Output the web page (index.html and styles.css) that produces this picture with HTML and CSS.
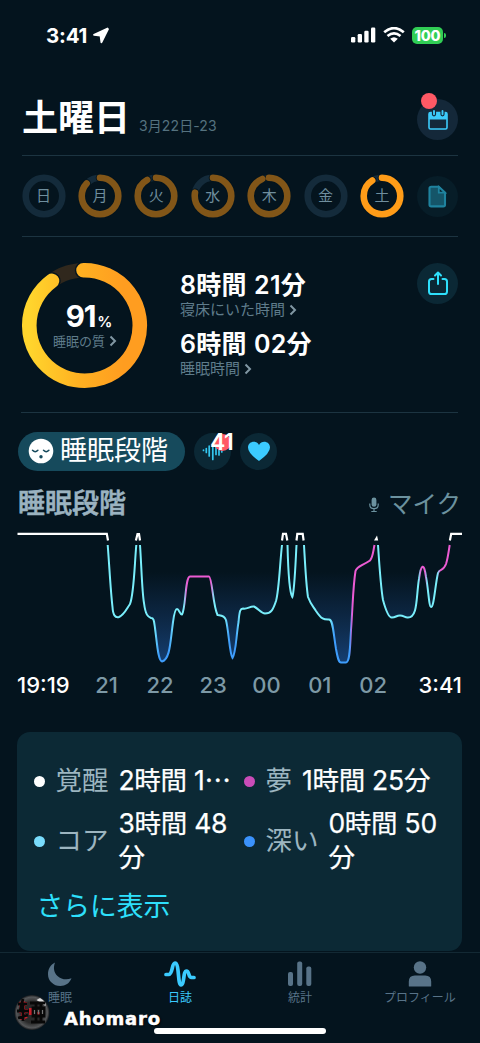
FILE: index.html
```html
<!DOCTYPE html>
<html lang="ja">
<head>
<meta charset="utf-8">
<title>睡眠日誌</title>
<link rel="stylesheet" href="styles.css">
</head>
<body>
<div class="app">
  <header class="status">
    <div class="status-left"><span class="clock">3:41</span>
      <svg width="18" height="18" viewBox="0 0 18 18"><path d="M15.500 1.500 2 7.800l6.500.900.900 6.700L16 2.200z" fill="#fff" stroke="#fff" stroke-width="1.800" stroke-linejoin="round"/></svg>
    </div>
    <div class="status-right">
      <svg width="25" height="16" viewBox="0 0 25 16" fill="#fff"><rect x="0" y="10" width="4.300" height="5.500" rx="1.200"/><rect x="6.700" y="7" width="4.300" height="8.500" rx="1.200"/><rect x="13.300" y="3.700" width="4.300" height="11.800" rx="1.200"/><rect x="20" y=".5" width="4.300" height="15" rx="1.200"/></svg>
      <svg width="22" height="16" viewBox="0 0 22 16" fill="none" stroke="#fff" stroke-width="2.700"><path d="M1.200 5.300Q11-3 20.800 5.300M4.500 9q6.500-5.400 13 0"/><path d="M7.200 11.800q3.800-3.300 7.600 0L11 15.500z" fill="#fff" stroke="none"/></svg>
      <div class="battery"><span class="cell">100</span><span class="nub"></span></div>
    </div>
  </header>

  <section class="title-row">
    <h1>土曜日</h1><span class="date">3月22日-23</span>
    <button class="round calendar">
      <svg width="22" height="22" viewBox="0 0 22 22"><rect x="2" y="3.500" width="18" height="16.500" rx="1.500" fill="none" stroke="#3ccbfb" stroke-width="1.600"/><path d="M2 4h18v6.500H2z" fill="#3ccbfb"/><path d="M7 2.300v3M15.500 2.300v3" stroke="#142839" stroke-width="4.200" stroke-linecap="round"/><path d="M7 2v3.300M15.500 2v3.300" stroke="#3ccbfb" stroke-width="1.900" stroke-linecap="round"/></svg>
      <i class="dot"></i>
    </button>
  </section>

  <section class="week">
    <div class="day"><svg viewBox="0 0 44 44"><circle class="track" cx="22" cy="22" r="18.300"/></svg><span>日</span></div>
    <div class="day"><svg viewBox="0 0 44 44"><circle class="track" cx="22" cy="22" r="18.300"/><circle class="cut" pathLength="100" stroke-dasharray="87 100" cx="22" cy="22" r="18.300"/><circle class="arc" pathLength="100" stroke-dasharray="87 100" cx="22" cy="22" r="18.300"/></svg><span>月</span></div>
    <div class="day"><svg viewBox="0 0 44 44"><circle class="track" cx="22" cy="22" r="18.300"/><circle class="cut" pathLength="100" stroke-dasharray="92 100" cx="22" cy="22" r="18.300"/><circle class="arc" pathLength="100" stroke-dasharray="92 100" cx="22" cy="22" r="18.300"/></svg><span>火</span></div>
    <div class="day"><svg viewBox="0 0 44 44"><circle class="track" cx="22" cy="22" r="18.300"/><circle class="cut" pathLength="100" stroke-dasharray="78 100" cx="22" cy="22" r="18.300"/><circle class="arc" pathLength="100" stroke-dasharray="78 100" cx="22" cy="22" r="18.300"/></svg><span>水</span></div>
    <div class="day"><svg viewBox="0 0 44 44"><circle class="track" cx="22" cy="22" r="18.300"/><circle class="cut" pathLength="100" stroke-dasharray="94 100" cx="22" cy="22" r="18.300"/><circle class="arc" pathLength="100" stroke-dasharray="94 100" cx="22" cy="22" r="18.300"/></svg><span>木</span></div>
    <div class="day"><svg viewBox="0 0 44 44"><circle class="track" cx="22" cy="22" r="18.300"/></svg><span>金</span></div>
    <div class="day today"><svg viewBox="0 0 44 44"><circle class="track" cx="22" cy="22" r="18.300"/><circle class="cut" pathLength="100" stroke-dasharray="91 100" cx="22" cy="22" r="18.300"/><circle class="arc" pathLength="100" stroke-dasharray="91 100" cx="22" cy="22" r="18.300"/></svg><span>土</span></div>
    <div class="round note">
      <svg width="19" height="23" viewBox="0 0 19 23"><path d="M3.200 1.700h7.600l6.200 6v12q0 1.700-1.700 1.700H3.200q-1.700 0-1.700-1.700V3.400q0-1.700 1.700-1.700z" fill="#155569" stroke="#1f839f" stroke-width="2.100"/><path d="M10.800 2v5.700H17z" fill="#08222d" stroke="#1f839f" stroke-width="1.800"/></svg>
    </div>
  </section>

  <section class="summary">
    <div class="quality">
      <svg class="quality-ring" viewBox="0 0 128 128">
        <defs><linearGradient id="sun" x1="1" y1="0" x2="0" y2="0"><stop offset=".15" stop-color="#ff9d20"/><stop offset=".55" stop-color="#ffb121"/><stop offset="1" stop-color="#ffd52d"/></linearGradient></defs>
        <circle class="q-track" cx="64" cy="64" r="55.700"/>
        <path class="q-cut" d="M63 8.300A55.700 55.700 0 1 1 31.200 19"/>
        <path class="q-arc" d="M63 8.300A55.700 55.700 0 1 1 31.200 19"/>
      </svg>
      <div class="quality-text">
        <div class="score">91<small>%</small></div>
        <div class="link">睡眠の質<svg width="8" height="12" viewBox="0 0 8 12"><path d="M1.500 1.500 6 6l-4.500 4.500"/></svg></div>
      </div>
    </div>
    <div class="times">
      <div class="big">8時間 21分</div>
      <div class="link">寝床にいた時間<svg width="8" height="12" viewBox="0 0 8 12"><path d="M1.500 1.500 6 6l-4.500 4.500"/></svg></div>
      <div class="big second">6時間 02分</div>
      <div class="link">睡眠時間<svg width="8" height="12" viewBox="0 0 8 12"><path d="M1.500 1.500 6 6l-4.500 4.500"/></svg></div>
    </div>
    <button class="round share">
      <svg width="22" height="26" viewBox="0 0 22 26" fill="none" stroke="#2ee0fc" stroke-width="2" stroke-linecap="round" stroke-linejoin="round"><path d="M6.500 8H4.600Q2 8 2 10.600v9.800Q2 23 4.600 23h12.800q2.600 0 2.600-2.600v-9.800Q20 8 17.400 8h-1.900M11 13V1.800M8 4.500l3-3 3 3"/></svg>
    </button>
  </section>

  <nav class="chips">
    <div class="chip">
      <svg width="26" height="26" viewBox="0 0 26 26"><circle cx="13" cy="13" r="12.300" fill="#fff"/><path d="M4.500 12.300q2.700 2.700 5.400 0M15.500 12.300q2.700 2.700 5.400 0" fill="none" stroke="#164a5c" stroke-width="1.500" stroke-linecap="round"/><circle cx="13" cy="18.800" r="1.700" fill="#164a5c"/></svg>
      <span>睡眠段階</span>
    </div>
    <div class="circle">
      <svg width="24" height="20" viewBox="0 0 24 20" stroke="#34c6ef" stroke-width="1.700" stroke-linecap="round"><path d="M2.500 9v.5M5.300 7.500v4M8.200 5v10M11.800 4v14.500M15 5v8.500M18 6v8M20.800 8v3"/></svg>
      <i class="bubble"></i><b class="count">41</b>
    </div>
    <div class="circle">
      <svg width="24" height="22" viewBox="0 0 24 22"><path d="M12 21Q1 13.300 1 7.600C1 1.200 9.300-.3 12 5 14.700-.3 23 1.200 23 7.600Q23 13.300 12 21z" fill="#3bcbff"/></svg>
    </div>
  </nav>

  <section class="stage-head">
    <h2>睡眠段階</h2>
    <div class="mic"><svg width="10" height="16" viewBox="0 0 10 16"><rect x="2.600" y=".5" width="4.800" height="9.300" rx="2.400" fill="#6c929f"/><path d="M.8 6.500v1.300q0 3.900 4.200 3.900t4.200-3.900V6.500M5 12v2.500M2.300 14.500h5.400" fill="none" stroke="#6c929f" stroke-width="1.200"/></svg><span>マイク</span></div>
  </section>

  <svg class="chart" viewBox="0 528 480 142">
    <defs>
      <linearGradient id="line" gradientUnits="userSpaceOnUse" x1="0" y1="0" x2="480" y2="0">
        <stop offset=".321" stop-color="#79eefb"/><stop offset=".331" stop-color="#3e9dfc"/><stop offset=".352" stop-color="#3e9dfc"/><stop offset=".363" stop-color="#79eefb"/>
        <stop offset=".383" stop-color="#79eefb"/><stop offset=".389" stop-color="#ec5bd3"/><stop offset=".439" stop-color="#ec5bd3"/><stop offset=".446" stop-color="#79eefb"/>
        <stop offset=".469" stop-color="#79eefb"/><stop offset=".477" stop-color="#3e9dfc"/><stop offset=".491" stop-color="#3e9dfc"/><stop offset=".5" stop-color="#79eefb"/>
        <stop offset=".688" stop-color="#79eefb"/><stop offset=".696" stop-color="#3e9dfc"/><stop offset=".729" stop-color="#3e9dfc"/><stop offset=".734" stop-color="#ec5bd3"/>
        <stop offset=".783" stop-color="#ec5bd3"/><stop offset=".784" stop-color="#79eefb"/><stop offset=".872" stop-color="#79eefb"/><stop offset=".877" stop-color="#ec5bd3"/>
        <stop offset=".885" stop-color="#ec5bd3"/><stop offset=".89" stop-color="#79eefb"/><stop offset=".911" stop-color="#79eefb"/><stop offset=".918" stop-color="#ec5bd3"/>
      </linearGradient>
      <linearGradient id="depth" gradientUnits="userSpaceOnUse" x1="0" y1="572" x2="0" y2="662"><stop stop-color="#12325a" stop-opacity="0"/><stop offset=".4" stop-color="#12325a" stop-opacity=".5"/><stop offset="1" stop-color="#153f72"/></linearGradient>
    </defs>
    <path fill="url(#depth)" d="M140 545C141.500 566 142 592 144 603C145.500 615 148 617 151 618C154 618 154 621 155 628C157 642 158 661 162 661.500C170 659 170 644 173 622C174.500 611 176 609 177 609C179 609 180 615 182 614.500C186 608 185 577 190 576.500H209C212 577 213 606 217.500 615C220 615.500 224 614.500 226 620C229 632 229.500 654 232.500 658C236 653 236 637 238.500 622C239.500 610 240.500 608.500 243 608.500C247 609.500 250 606 254 606.500C259 609 261 613.500 265 613.500C271 613.500 273 610 276 601C279 591 280 562 282 545H287.500C288 565 289 592 292.300 597C294.500 592 295.500 563 296.500 545H304C305 562 306 584 308 597C311 605 313 606 316 611C322 620 324 619.500 329 619.500C333 619.500 333 630 336 649C338 660 339 662.500 341 662.500H346C350 662 350 647 351 630C353 602 353 587 355 572C356.500 566 362 567 370 561L374.500 545H378C379.500 568 381 589 383 600C386 611 389 618 392 617.500C396 617.500 396 615.500 400 615.500C404 615.500 405 618 408 617.500C418 617.500 416 597 419 579C421 564 424 562 426 577C428.500 590 429 607 431 607C434 607 435 586 438 573C440 568 443 572 446 564L450 545Z"/>
    <g fill="none" stroke="url(#line)" stroke-width="2">
      <path d="M107.700 545C109.500 568 110.500 590 112.500 607C113 615 115 618 119 617C124 615 126 610 130 604C134 594 134.500 565 136.300 545"/>
      <path d="M140 545C141.500 566 142 592 144 603C145.500 615 148 617 151 618C154 618 154 621 155 628C157 642 158 661 162 661.500C170 659 170 644 173 622C174.500 611 176 609 177 609C179 609 180 615 182 614.500C186 608 185 577 190 576.500H209C212 577 213 606 217.500 615C220 615.500 224 614.500 226 620C229 632 229.500 654 232.500 658C236 653 236 637 238.500 622C239.500 610 240.500 608.500 243 608.500C247 609.500 250 606 254 606.500C259 609 261 613.500 265 613.500C271 613.500 273 610 276 601C279 591 280 562 282 545"/>
      <path d="M287.500 545C288 565 289 592 292.300 597C294.500 592 295.500 563 296.500 545M304 545C305 562 306 584 308 597C311 605 313 606 316 611C322 620 324 619.500 329 619.500C333 619.500 333 630 336 649C338 660 339 662.500 341 662.500H346C350 662 350 647 351 630C353 602 353 587 355.500 571C357 566 362 566 370 560.500C373 557 373 552 374.500 545"/>
      <path d="M378 545C379.500 568 381 589 383 600C386 611 389 618 392 617.500C396 617.500 396 615.500 400 615.500C404 615.500 405 618 408 617.500C418 617.500 416 597 419 579C421 564 424 562 426 577C428.500 590 429 607 431 607C434 607 435 586 438 573C440 568 443 572 446 564C448 558 448.500 552 449.700 545"/>
    </g>
    <path fill="none" stroke="#fff" stroke-width="2.200" d="M17.500 533.900H106.800L108 540.500M135.900 540.500 137.500 534H139L140 540.500M282 540.500 283 533.900H286L287.300 540.500M296.500 540.500 297.300 533.900H302.700L303.600 540.500M449.900 540.500 451.200 533.900H462"/>
    <path d="M374 540.500 377 535.500 378.200 540.500z" fill="#fff"/>
  </svg>

  <div class="axis"><span class="edge">19:19</span><span>21</span><span>22</span><span>23</span><span>00</span><span>01</span><span>02</span><span class="edge last">3:41</span></div>

  <section class="card">
    <div class="legend">
      <div class="item"><i class="white"></i><span class="name">覚醒</span><span class="value">2時間 1⋯</span></div>
      <div class="item"><i class="pink"></i><span class="name">夢</span><span class="value">1時間 25分</span></div>
      <div class="item"><i class="cyan"></i><span class="name">コア</span><span class="value">3時間 48<br>分</span></div>
      <div class="item"><i class="blue"></i><span class="name">深い</span><span class="value">0時間 50<br>分</span></div>
    </div>
    <a class="more">さらに表示</a>
  </section>

  <footer class="tabs">
    <div class="tab"><svg width="26" height="26" viewBox="0 0 26 26"><path d="M8 1.500C6 7 7 11.500 10.500 15c4 3.800 9.500 4 14 2.300C22.500 22.300 18.500 25 13.300 25 6.500 25 1 19.800 1 13.200 1 8 3.500 3.700 8 1.500z" fill="#587388"/></svg><span>睡眠</span></div>
    <div class="tab on"><svg width="32" height="26" viewBox="0 0 32 26"><path d="M2 13.500h2.500c4.500 0 3-11.300 6.500-11.300 4.500 0 2.500 21.600 6 21.600 3.500 0 2-13.800 5.500-13.800 3 0 1.500 6.500 5 6.500H30" fill="none" stroke="#3bcbff" stroke-width="3.700" stroke-linecap="round" stroke-linejoin="round"/></svg><span>日誌</span></div>
    <div class="tab"><svg width="24" height="26" viewBox="0 0 24 26" fill="#587388"><rect x="0" y="11" width="5" height="14" rx="2"/><rect x="9.200" y=".5" width="5" height="24.500" rx="2"/><rect x="18.300" y="5.500" width="5" height="19.500" rx="2"/></svg><span>統計</span></div>
    <div class="tab"><svg width="24" height="26" viewBox="0 0 24 26" fill="#587388"><circle cx="12" cy="6.500" r="6.200"/><path d="M.8 25v-4.500q0-6 6-6h10.400q6 0 6 6V25q0 .5-.5.500H1.300q-.5 0-.5-.5z"/></svg><span>プロフィール</span></div>
  </footer>
  <div class="home"></div>
  <div class="signature">
    <svg width="38" height="38" viewBox="0 0 38 38">
      <defs><radialGradient id="badge"><stop offset=".6" stop-color="#292929"/><stop offset=".88" stop-color="#555759"/><stop offset="1" stop-color="#171a1d"/></radialGradient></defs>
      <circle cx="19" cy="18.500" r="17.500" fill="url(#badge)"/>
      <path d="M27 4q6 3 5.500 8l-9-6z" fill="#ddd"/>
      <g fill="none" stroke="#c9202c" stroke-width="4"><path d="M6 10h8M10 7l-2 9M6 17h9M10 12v14M7 24l7-2M18 14v7M20 20h7"/></g>
      <g fill="none" stroke="#080808" stroke-width="2.800"><path d="M5 10h9M10 5l-3 12M4 17h12M10 10v17M5 24l10-3M17 9h15M20 14h11v8H20zM23 9v20M28 9v20M18 28h14"/></g>
      <path d="M21.500 16v4M25.500 16v4M29.500 16v4" stroke="#777" stroke-width="1.200"/>
    </svg>
    <span>Ahomaro</span>
  </div>
</div>
</body>
</html>
```
FILE: styles.css
```css
* { box-sizing: border-box; }
body { margin: 0; background: #04141e; color: #fff; font-family: Inter, "Noto Sans CJK JP", sans-serif; }
h1, h2 { margin: 0; }
button { border: 0; padding: 0; }
svg { display: block; flex: none; }
.app { position: relative; width: 480px; height: 1043px; overflow: hidden; display: flex; flex-direction: column; white-space: nowrap; }
.app > * { flex: none; }

.status { height: 72px; padding: 0 34px 0 46px; display: flex; justify-content: space-between; align-items: center; }
.status-left { display: flex; align-items: center; gap: 5px; margin-top: -1px; }
.clock { font-size: 20.500px; line-height: 24px; font-weight: 700; letter-spacing: -.2px; }
.status-right { display: flex; align-items: center; gap: 7px; margin-top: -2px; }
.battery { display: flex; align-items: center; gap: 1px; }
.cell { width: 31px; height: 17px; border-radius: 5px; background: #31ce55; font-size: 14.500px; line-height: 17px; font-weight: 800; text-align: center; letter-spacing: -.2px; }
.nub { width: 2px; height: 5px; border-radius: 0 2px 2px 0; background: #31ce55; }

.title-row { height: 83px; margin: 0 22px; display: flex; align-items: flex-start; }
h1 { font-size: 36px; line-height: 50px; padding-top: 21px; font-weight: 700; }
.date { margin: 44px 0 0 9px; font-size: 14px; line-height: 20px; color: #55727f; letter-spacing: .1px; }
.round { width: 41px; height: 41px; border-radius: 50%; background: #0b2835; display: flex; align-items: center; justify-content: center; flex: none; }
.calendar { position: relative; margin: 27px 0 0 auto; background: #142839; }
.dot { position: absolute; left: 4px; top: -6px; width: 16px; height: 16px; border-radius: 50%; background: #ff5965; }

.week { height: 82px; margin: 0 22px; border-top: 1px solid #1c3441; border-bottom: 1px solid #1c3441; display: flex; align-items: center; justify-content: space-between; }
.day { width: 43px; height: 44px; display: grid; place-items: center; font-size: 15px; line-height: 20px; color: #6f8e9d; }
.day svg, .day span { grid-area: 1 / 1; }
.day svg { width: 44px; height: 44px; margin: 0 -.5px; }
.day circle { fill: none; stroke-width: 6.600; stroke-linecap: round; }
.day .track { stroke: #142b3b; }
.day .arc { stroke: #825618; transform: rotate(-90deg); transform-origin: center; }
.day .cut { stroke: #04141e; stroke-width: 8.500; transform: rotate(-90deg); transform-origin: center; }
.today .arc { stroke: #ff9c18; }
.note { background: #071d28; }

.summary { height: 176px; margin: 0 22px 0 21px; border-bottom: 1px solid #1c3441; display: flex; align-items: flex-start; }
.quality { width: 127px; height: 127px; margin-top: 25px; display: grid; place-items: center; }
.quality > * { grid-area: 1 / 1; }
.quality-ring { width: 127px; height: 127px; }
.q-track, .q-cut, .q-arc { fill: none; stroke-width: 14.700; stroke-linecap: round; }
.q-track { stroke: #30281d; }
.q-cut { stroke: #04141e; stroke-width: 17.500; }
.q-arc { stroke: url(#sun); }
.quality-text { display: flex; flex-direction: column; align-items: center; padding-left: 1px; }
.score { font-size: 29.500px; line-height: 28px; font-weight: 700; letter-spacing: -1.200px; padding: 0 0 0 8px; margin-bottom: -3px; }
.score small { font-size: 15px; font-weight: 600; letter-spacing: 0; margin-left: 2px; }
.link { display: flex; align-items: center; gap: 4px; font-size: 13px; line-height: 16px; color: #5f7c8b; }
.link svg path { fill: none; stroke: #8197a3; stroke-width: 2; }
.times { margin: 32px 0 0 32px; }
.big { font-size: 25px; line-height: 30px; font-weight: 600; letter-spacing: .2px; word-spacing: 1px; padding-top: 1px; }
.times .link { font-size: 15px; line-height: 20px; padding-bottom: 1px; }
.second { margin-top: 7px; }
.share { margin: 26px 0 0 auto; }

.chips { height: 38px; margin: 19px 0 0 18px; display: flex; align-items: center; gap: 9px; }
.chip { width: 167px; height: 39px; border-radius: 20px; background: #164a5c; display: flex; align-items: center; gap: 6px; padding-left: 10px; font-size: 27px; line-height: 38px; }
.circle { position: relative; width: 37px; height: 37px; border-radius: 50%; background: #0b2835; display: flex; align-items: center; justify-content: center; }
.bubble { position: absolute; left: 20px; top: 1px; width: 17px; height: 17px; border-radius: 50%; background: #ff5965; }
.count { position: absolute; left: 16px; top: -3px; font-size: 23px; line-height: 24px; font-weight: 600; letter-spacing: -.7px; }

.stage-head { height: 58px; padding: 15px 19px 0 18px; display: flex; justify-content: space-between; line-height: 38px; }
h2 { font-size: 27px; line-height: 38px; font-weight: 500; color: #9bb3c0; -webkit-text-stroke: .6px #9bb3c0; }
.mic { display: flex; align-items: center; gap: 9px; height: 38px; font-size: 24.500px; color: #6c929f; }
.mic svg { margin-top: 2px; }
.chart { width: 480px; height: 142px; }
.axis { height: 30px; padding: 0 18px 0 17px; display: grid; grid-template-columns: 63px repeat(6, 53.300px) 1fr; align-items: center; font-size: 22px; font-weight: 500; color: #7d99a6; text-align: center; }
.edge { color: #fff; text-align: left; }
.edge.last { justify-self: end; }

.card { width: 445px; height: 219px; margin: 32px 0 0 17.400px; border-radius: 13px; background: #0c2935; padding: 31px 17px; }
.legend { display: grid; grid-template-columns: 210px 1fr; row-gap: 8px; }
.item { display: flex; align-items: center; font-size: 26.500px; line-height: 34.500px; }
.item i { width: 11px; height: 11px; border-radius: 50%; margin: 2px 10px 0 0; flex: none; }
.white { background: #fff; }
.pink { background: #ca4cb8; }
.cyan { background: #79dcfc; }
.blue { background: #3b92fc; }
.name { color: #9cb5c0; margin-right: 10px; }
.value { font-weight: 400; letter-spacing: -.25px; -webkit-text-stroke: .25px #fff; }
.more { display: block; margin: 12px 0 0 2px; font-size: 26.800px; line-height: 38px; color: #2ee0fc; }

.tabs { height: 92px; border-top: 1px solid #132934; margin-top: 1px; display: grid; grid-template-columns: repeat(4, 1fr); padding-top: 8px; }
.tab { display: flex; flex-direction: column; align-items: center; gap: 3px; font-size: 12px; line-height: 16px; color: #587388; }
.on { color: #3bcbff; }
.home { position: absolute; left: 154px; top: 1028px; width: 172px; height: 6px; border-radius: 3px; background: #fff; }
.signature { position: absolute; left: 13px; top: 994px; display: flex; align-items: center; gap: 13px; }
.signature span { font: 700 18px/22px "DejaVu Sans", sans-serif; letter-spacing: .8px; padding-top: 12px; text-shadow: 1px 1px 2px #000; -webkit-text-stroke: .5px #fff; }
```
